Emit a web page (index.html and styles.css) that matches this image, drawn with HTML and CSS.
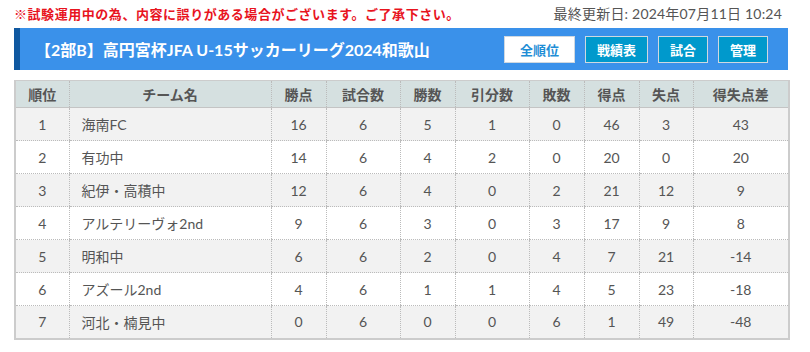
FILE: index.html
```html
<!DOCTYPE html>
<html lang="ja">
<head>
<meta charset="utf-8">
<link rel="stylesheet" href="styles.css">
</head>
<body>
<div class="page">
  <div class="topline">
    <span class="notice">※試験運用中の為、内容に誤りがある場合がございます。ご了承下さい。</span>
    <span class="updated">最終更新日: 2024年07月11日 10:24</span>
  </div>
  <div class="titlebar">
    <h1 class="title">【2部B】高円宮杯JFA U-15サッカーリーグ2024和歌山</h1>
    <div class="btns">
      <span class="btn active">全順位</span>
      <span class="btn">戦績表</span>
      <span class="btn">試合</span>
      <span class="btn">管理</span>
    </div>
  </div>
  <table class="standings">
    <colgroup>
      <col class="c-rank"><col class="c-team"><col class="c-pt"><col class="c-gp"><col class="c-w"><col class="c-d"><col class="c-l"><col class="c-gf"><col class="c-ga"><col class="c-gd">
    </colgroup>
    <thead>
      <tr><th>順位</th><th>チーム名</th><th>勝点</th><th>試合数</th><th>勝数</th><th>引分数</th><th>敗数</th><th>得点</th><th>失点</th><th>得失点差</th></tr>
    </thead>
    <tbody>
      <tr><td>1</td><td class="team">海南FC</td><td>16</td><td>6</td><td>5</td><td>1</td><td>0</td><td>46</td><td>3</td><td>43</td></tr>
      <tr><td>2</td><td class="team">有功中</td><td>14</td><td>6</td><td>4</td><td>2</td><td>0</td><td>20</td><td>0</td><td>20</td></tr>
      <tr><td>3</td><td class="team">紀伊・高積中</td><td>12</td><td>6</td><td>4</td><td>0</td><td>2</td><td>21</td><td>12</td><td>9</td></tr>
      <tr><td>4</td><td class="team">アルテリーヴォ2nd</td><td>9</td><td>6</td><td>3</td><td>0</td><td>3</td><td>17</td><td>9</td><td>8</td></tr>
      <tr><td>5</td><td class="team">明和中</td><td>6</td><td>6</td><td>2</td><td>0</td><td>4</td><td>7</td><td>21</td><td>-14</td></tr>
      <tr><td>6</td><td class="team">アズール2nd</td><td>4</td><td>6</td><td>1</td><td>1</td><td>4</td><td>5</td><td>23</td><td>-18</td></tr>
      <tr><td>7</td><td class="team">河北・楠見中</td><td>0</td><td>6</td><td>0</td><td>0</td><td>6</td><td>1</td><td>49</td><td>-48</td></tr>
    </tbody>
  </table>
</div>
</body>
</html>
```
FILE: styles.css
```css
* { box-sizing: border-box; }
body {
  margin: 0;
  background: #fff;
  font-family: "Lato", "Noto Sans CJK JP", sans-serif;
  color: #555;
}
.page {
  width: 774px;
  margin-left: 14px;
}
.topline {
  display: flex;
  justify-content: space-between;
  align-items: center;
  height: 28px;
  padding-bottom: 2px;
  font-size: 13px;
}
.notice {
  color: #e8141e;
  font-family: "Noto Sans CJK JP", sans-serif;
  font-size: 13px;
  font-weight: 700;
  letter-spacing: 0.55px;
}
.updated {
  color: #555;
  padding-right: 6px;
  font-size: 14px;
  letter-spacing: 0.2px;
}
.titlebar {
  display: flex;
  align-items: center;
  justify-content: space-between;
  height: 42px;
  background: #3a91ea;
  border-left: 6px solid #0f58a0;
  padding: 0 20px 0 15px;
}
.title {
  margin: 0;
  color: #fff;
  font-size: 16px;
  font-weight: 700;
}
.btns {
  display: flex;
  gap: 10px;
}
.btn {
  display: flex;
  align-items: center;
  justify-content: center;
  height: 27px;
  padding: 0 11px;
  border: 1px solid #cfd8e0;
  background: #0099cc;
  color: #fff;
  font-size: 13px;
  font-weight: 700;
  font-family: "Noto Sans CJK JP", sans-serif;
}
.btn.active {
  background: #fff;
  color: #1f8ed6;
  padding: 0 15px;
}
.standings {
  margin-top: 10px;
  width: 774px;
  border-collapse: collapse;
  table-layout: fixed;
  border: 2px solid #cccccc;
  border-top-width: 1px;
  font-size: 14px;
}
.c-rank { width: 54px; }
.c-team { width: 202px; }
.c-pt { width: 55px; }
.c-gp { width: 74px; }
.c-w { width: 55px; }
.c-d { width: 74px; }
.c-l { width: 55px; }
.c-gf { width: 55px; }
.c-ga { width: 54px; }
.c-gd { width: 96px; }
.standings th {
  height: 27px;
  background: #d5e0e0;
  color: #555;
  font-weight: 700;
  font-size: 14px;
  border-left: 1px dotted #bbb;
  border-bottom: 1px solid #c4c4c4;
  padding: 0;
}
.standings td {
  height: 33px;
  text-align: center;
  border-left: 1px dotted #bbb;
  border-bottom: 1px dotted #bbb;
  padding: 0;
  color: #555;
}
.standings th:first-child, .standings td:first-child { border-left: none; }
.standings tbody tr:nth-child(odd) td { background: #f2f2f2; }
.standings tbody tr:nth-child(even) td { background: #fff; }
.standings td.team {
  text-align: left;
  padding-left: 12px;
}
```
